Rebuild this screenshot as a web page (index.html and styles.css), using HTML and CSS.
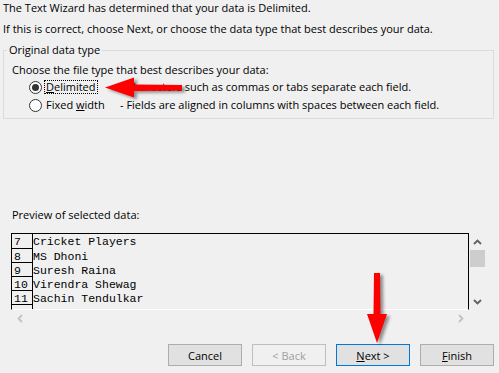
FILE: index.html
```html
<!DOCTYPE html>
<html>
<head>
<meta charset="utf-8">
<link rel="stylesheet" href="styles.css">
</head>
<body>
<div class="wizard">
  <p class="line l1">The Text Wizard has determined that your data is Delimited.</p>
  <p class="line l2">If this is correct, choose Next, or choose the data type that best describes your data.</p>
  <fieldset class="group">
    <legend class="legend">Original data type</legend>
    <div class="choose">Choose the file type that best describes your data:</div>
    <div class="opt">
      <span class="radio checked"></span>
      <span class="lblcell"><span class="lbl focus"><u>D</u>elimited</span></span>
      <span class="desc">- Characters such as commas or tabs separate each field.</span>
    </div>
    <div class="opt">
      <span class="radio"></span>
      <span class="lblcell"><span class="lbl">Fixed <u>w</u>idth</span></span>
      <span class="desc">- Fields are aligned in columns with spaces between each field.</span>
    </div>
  </fieldset>
  <div class="preview-label">Preview of selected data:</div>
  <div class="preview">
    <div class="box">
      <div class="row first"><span class="num">7</span><span class="txt">Cricket Players</span></div>
      <div class="row"><span class="num">8</span><span class="txt">MS Dhoni</span></div>
      <div class="row"><span class="num">9</span><span class="txt">Suresh Raina</span></div>
      <div class="row"><span class="num">10</span><span class="txt">Virendra Shewag</span></div>
      <div class="row"><span class="num">11</span><span class="txt">Sachin Tendulkar</span></div>
      <div class="row"><span class="num"></span><span class="txt"></span></div>
    </div>
    <div class="vscroll">
      <div class="sbtn"><svg width="9" height="6" viewBox="0 0 9 6"><path d="M1 5 L4.5 1.5 L8 5" fill="none" stroke="#606060" stroke-width="1.8"/></svg></div>
      <div class="thumb"></div>
      <div class="vspace"></div>
      <div class="sbtn"><svg width="9" height="6" viewBox="0 0 9 6"><path d="M1 1 L4.5 4.5 L8 1" fill="none" stroke="#606060" stroke-width="1.8"/></svg></div>
    </div>
    <div class="hscroll">
      <div class="sbtn"><svg width="6" height="9" viewBox="0 0 6 9"><path d="M5 1 L1.5 4.5 L5 8" fill="none" stroke="#c2c2c2" stroke-width="1.8"/></svg></div>
      <div class="hspace"></div>
      <div class="sbtn"><svg width="6" height="9" viewBox="0 0 6 9"><path d="M1 1 L4.5 4.5 L1 8" fill="none" stroke="#c2c2c2" stroke-width="1.8"/></svg></div>
    </div>
  </div>
  <div class="buttons">
    <button class="btn">Cancel</button>
    <button class="btn disabled">&lt; Back</button>
    <button class="btn default"><u>N</u>ext &gt;</button>
    <button class="btn"><u>F</u>inish</button>
  </div>
  <svg class="annot" width="499" height="373" viewBox="0 0 499 373">
    <polygon points="105,87.5 134,77.5 134,84.5 182,85 182,90.5 134,91 134,97.5" fill="#ff0000"/>
    <polygon points="374,273 380,273 380.5,314 387,314 377,343 367,314 373.5,314" fill="#ff0000"/>
  </svg>
</div>
</body>
</html>
```
FILE: styles.css
```css
html, body {
  margin: 0;
  padding: 0;
  background: #f0f0f0;
}
.wizard {
  position: relative;
  width: 499px;
  height: 373px;
  font-family: "Open Sans", "Noto Sans", Arial, sans-serif;
  font-size: 11px;
  color: #000;
  overflow: hidden;
}
.line {
  margin: 0;
  padding-left: 3px;
  line-height: 16px;
  height: 16px;
  white-space: nowrap;
}
.l2 { margin-top: 5px; }
.group {
  margin: 5px 0 0 3px;
  padding: 0 0 4px 0;
  width: 491px;
  box-sizing: border-box;
  border: 1px solid #dcdcdc;
  min-width: 0;
}
.legend {
  margin-left: 3px;
  padding: 0 2px;
  line-height: 16px;
}
.choose {
  margin-top: 4px;
  padding-left: 8px;
  line-height: 16px;
  height: 16px;
}
.opt {
  display: flex;
  align-items: center;
  height: 18px;
  line-height: 18px;
  white-space: nowrap;
  padding-left: 25px;
}
.radio {
  box-sizing: border-box;
  width: 13px;
  height: 13px;
  flex: none;
  border: 1px solid #333;
  border-radius: 50%;
  background: #fff;
  display: flex;
  align-items: center;
  justify-content: center;
}
.radio.checked::after {
  content: "";
  width: 7px;
  height: 7px;
  border-radius: 50%;
  background: #333;
}
.lblcell {
  width: 78px;
  flex: none;
  display: flex;
  align-items: center;
}
.lbl {
  margin-left: 2px;
  padding: 0 1px;
  line-height: 12px;
  height: 14px;
  box-sizing: border-box;
  border: 1px dotted transparent;
}
.lbl.focus { border-color: #000; }
.preview-label {
  margin-top: 88px;
  padding-left: 12px;
  line-height: 16px;
  height: 16px;
}
.preview {
  margin: 10px 0 0 11px;
  display: grid;
  grid-template-columns: 458px 17px;
  grid-template-rows: 77px 17px;
}
.box {
  box-sizing: border-box;
  border-top: 1px solid #000;
  border-left: 1px solid #000;
  border-right: 1px solid #000;
  border-bottom: 1px solid #fff;
  overflow: hidden;
  font-family: "Liberation Mono", "Courier New", monospace;
  font-size: 11.5px;
}
.row {
  display: flex;
  height: 14px;
}
.num {
  box-sizing: border-box;
  width: 21px;
  flex: none;
  border-right: 1px solid #000;
  border-bottom: 1px solid #000;
  padding-left: 2px;
  line-height: 15px;
}
.row.first .num { height: 15px; line-height: 16px; }
.row.first { height: 15px; }
.txt {
  line-height: 15px;
  white-space: pre;
}
.row.first .txt { line-height: 16px; }
.vscroll {
  display: flex;
  flex-direction: column;
  height: 77px;
}
.sbtn {
  width: 17px;
  height: 17px;
  flex: none;
  display: flex;
  align-items: center;
  justify-content: center;
}
.thumb {
  width: 15px;
  height: 17px;
  margin-left: 1px;
  background: #cdcdcd;
  flex: none;
}
.vspace { flex: 1; }
.hscroll {
  display: flex;
  height: 17px;
}
.hspace { flex: 1; }
.buttons {
  margin-top: 17px;
  display: flex;
  justify-content: flex-end;
  gap: 10px;
  padding-right: 5px;
}
.btn {
  width: 74px;
  height: 22px;
  box-sizing: border-box;
  border: 1px solid #adadad;
  background: #e1e1e1;
  font-family: "Open Sans", "Noto Sans", Arial, sans-serif;
  font-size: 11px;
  color: #000;
  padding: 0;
  margin: 0;
}
.btn.disabled {
  border-color: #bfbfbf;
  background: transparent;
  color: #a0a0a0;
}
.btn.default {
  border-color: #0078d7;
}
.annot {
  position: absolute;
  left: 0;
  top: 0;
  pointer-events: none;
  filter: drop-shadow(3px 2px 1.5px rgba(0, 0, 0, 0.4));
}
```
